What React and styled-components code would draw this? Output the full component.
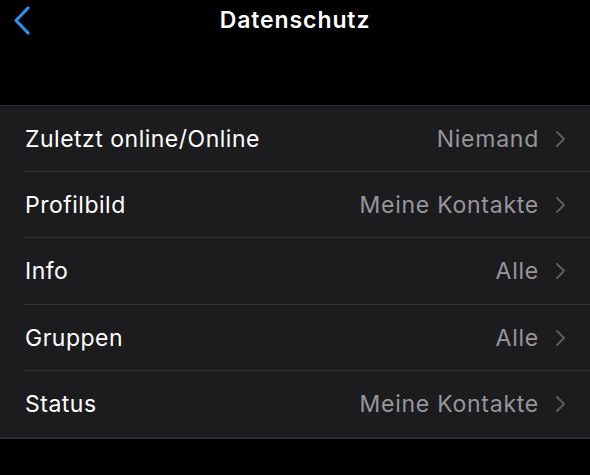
import React from "react";
import styled, { createGlobalStyle } from "styled-components";

const Global = createGlobalStyle`
  html, body { margin: 0; padding: 0; background: #000; }
  body { font-family: "Inter", "Liberation Sans", sans-serif; -webkit-font-smoothing: antialiased; }
`;

const Screen = styled.div`
  width: 590px;
  height: 475px;
  background: #000;
  display: flex;
  flex-direction: column;
  overflow: hidden;
`;

const NavBar = styled.header`
  height: 40px;
  display: grid;
  grid-template-columns: 60px 1fr 60px;
  align-items: center;
`;

const BackButton = styled.button`
  background: none;
  border: 0;
  padding: 0 0 0 12px;
  height: 40px;
  display: flex;
  align-items: center;
  cursor: pointer;
`;

const Title = styled.h1`
  margin: 0;
  text-align: center;
  color: #fff;
  font-size: 23px;
  font-weight: 600;
  letter-spacing: 0.9px;
`;

const Spacer = styled.div`
  height: 65px;
`;

const List = styled.ul`
  list-style: none;
  margin: 0;
  padding: 0;
  background: #1c1c1e;
  border-top: 1px solid #2a2a2c;
  border-bottom: 2px solid #2c2c2e;
`;

const Row = styled.li`
  height: 66.2px;
  display: flex;
  align-items: center;
  padding-left: 25px;
  box-sizing: border-box;
  position: relative;
  &:not(:last-child)::after {
    content: "";
    position: absolute;
    left: 24px;
    right: 0;
    bottom: 0;
    height: 1px;
    background: #343437;
  }
`;

const Label = styled.span`
  flex: 1;
  color: #fff;
  font-size: 23px;
  letter-spacing: 0.5px;
`;

const Value = styled.span`
  color: #96969b;
  font-size: 23px;
  letter-spacing: 0.75px;
  margin-right: 15px;
`;

const Chevron = styled.svg`
  width: 12px;
  height: 18px;
  margin-right: 24px;
`;

const rows = [
  ["Zuletzt online/Online", "Niemand"],
  ["Profilbild", "Meine Kontakte"],
  ["Info", "Alle"],
  ["Gruppen", "Alle"],
  ["Status", "Meine Kontakte"],
];

export default function App() {
  return (
    <Screen>
      <Global />
      <NavBar>
        <BackButton aria-label="Zurück">
          <svg width="20" height="30" viewBox="0 0 20 30">
            <path d="M16 3 L4 15.5 L16 28" fill="none" stroke="#2f8ff0" strokeWidth="3.2" strokeLinecap="round" strokeLinejoin="round" />
          </svg>
        </BackButton>
        <Title>Datenschutz</Title>
        <div />
      </NavBar>
      <Spacer />
      <List>
        {rows.map(([label, value]) => (
          <Row key={label}>
            <Label>{label}</Label>
            <Value>{value}</Value>
            <Chevron viewBox="0 0 12 18">
              <path d="M3 2 L10 9 L3 16" fill="none" stroke="#5c5c60" strokeWidth="2" strokeLinecap="round" strokeLinejoin="round" />
            </Chevron>
          </Row>
        ))}
      </List>
    </Screen>
  );
}
